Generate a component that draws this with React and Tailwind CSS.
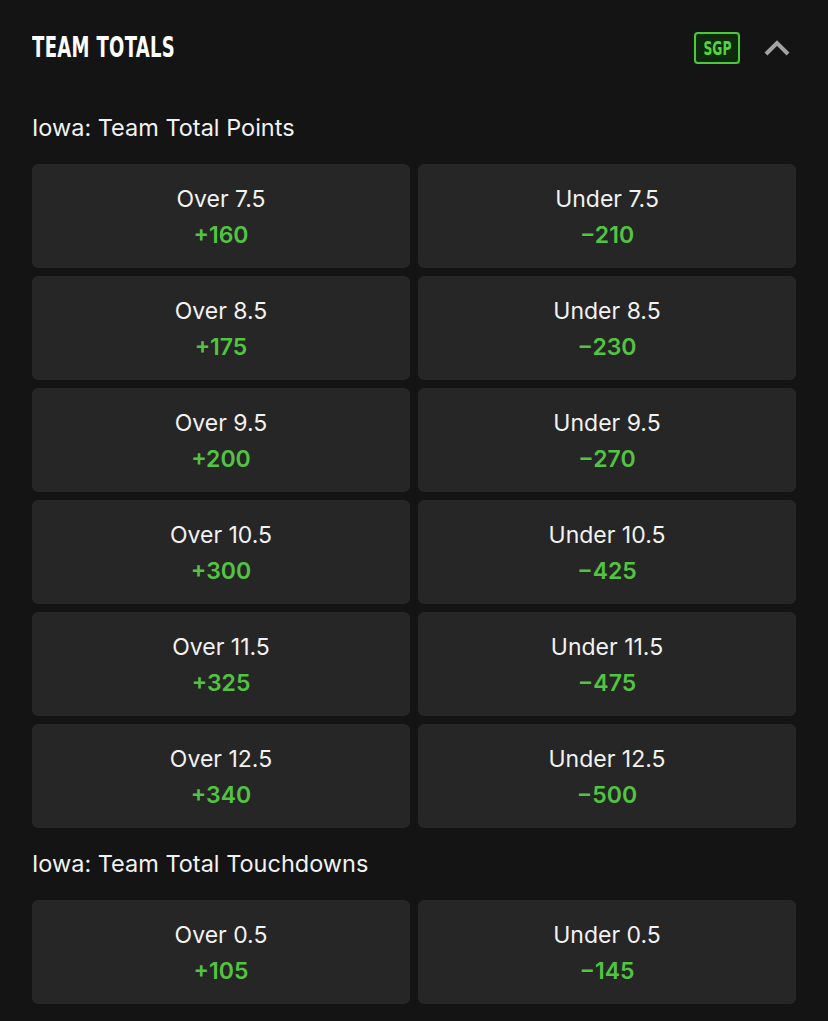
import React from "react";

const points = [
  ["Over 7.5", "+160", "Under 7.5", "−210"],
  ["Over 8.5", "+175", "Under 8.5", "−230"],
  ["Over 9.5", "+200", "Under 9.5", "−270"],
  ["Over 10.5", "+300", "Under 10.5", "−425"],
  ["Over 11.5", "+325", "Under 11.5", "−475"],
  ["Over 12.5", "+340", "Under 12.5", "−500"],
];
const tds = [["Over 0.5", "+105", "Under 0.5", "−145"]];

function Cell({ label, odds }) {
  return (
    <div className="h-[104px] rounded-[6px] bg-[#262626] flex flex-col items-center justify-center">
      <div className="text-[23px] leading-[28px] mt-[2px] text-[#f2f2f2]">{label}</div>
      <div className="text-[23px] leading-[28px] mt-[8px] font-semibold text-[#53c441]">{odds}</div>
    </div>
  );
}

function Grid({ rows }) {
  return (
    <div className="grid grid-cols-2 gap-x-[8px] gap-y-[8px]">
      {rows.map((r, i) => (
        <React.Fragment key={i}>
          <Cell label={r[0]} odds={r[1]} />
          <Cell label={r[2]} odds={r[3]} />
        </React.Fragment>
      ))}
    </div>
  );
}

export default function App() {
  return (
    <div
      className="w-[828px] h-[1021px] overflow-hidden bg-[#141414] px-[32px] text-white"
      style={{ fontFamily: "Inter, Roboto, 'Liberation Sans', sans-serif" }}
    >
      <div className="h-[96px] flex items-center justify-between">
        <div
          className="text-[29px] font-bold tracking-[0.5px] text-white"
          style={{ fontFamily: "'DejaVu Sans Condensed', 'Liberation Sans Narrow', sans-serif", fontStretch: "condensed" }}
        >
          <span className="inline-block origin-left scale-x-[0.69]">TEAM TOTALS</span>
        </div>
        <div className="flex items-center gap-[24px] pr-[6px]">
          <div className="w-[46px] h-[32px] rounded-[4px] border-2 border-[#4ccb3a] bg-[#0d2a0c] flex items-center justify-center">
            <span
              className="text-[19px] font-bold text-[#55d43f] inline-block scale-x-[0.72]"
              style={{ fontFamily: "'DejaVu Sans Condensed', 'Liberation Sans Narrow', sans-serif" }}
            >
              SGP
            </span>
          </div>
          <svg width="26" height="16" viewBox="0 0 26 16">
            <path d="M2 14 L13 3 L24 14" fill="none" stroke="#a3a3a3" strokeWidth="4" strokeLinejoin="miter" />
          </svg>
        </div>
      </div>
      <div className="h-[64px] flex items-center text-[23.5px] text-[#f2f2f2]">Iowa: Team Total Points</div>
      <div className="mt-[4px]">
        <Grid rows={points} />
      </div>
      <div className="h-[72px] flex items-center text-[23.5px] text-[#f2f2f2]">Iowa: Team Total Touchdowns</div>
      <Grid rows={tds} />
    </div>
  );
}
